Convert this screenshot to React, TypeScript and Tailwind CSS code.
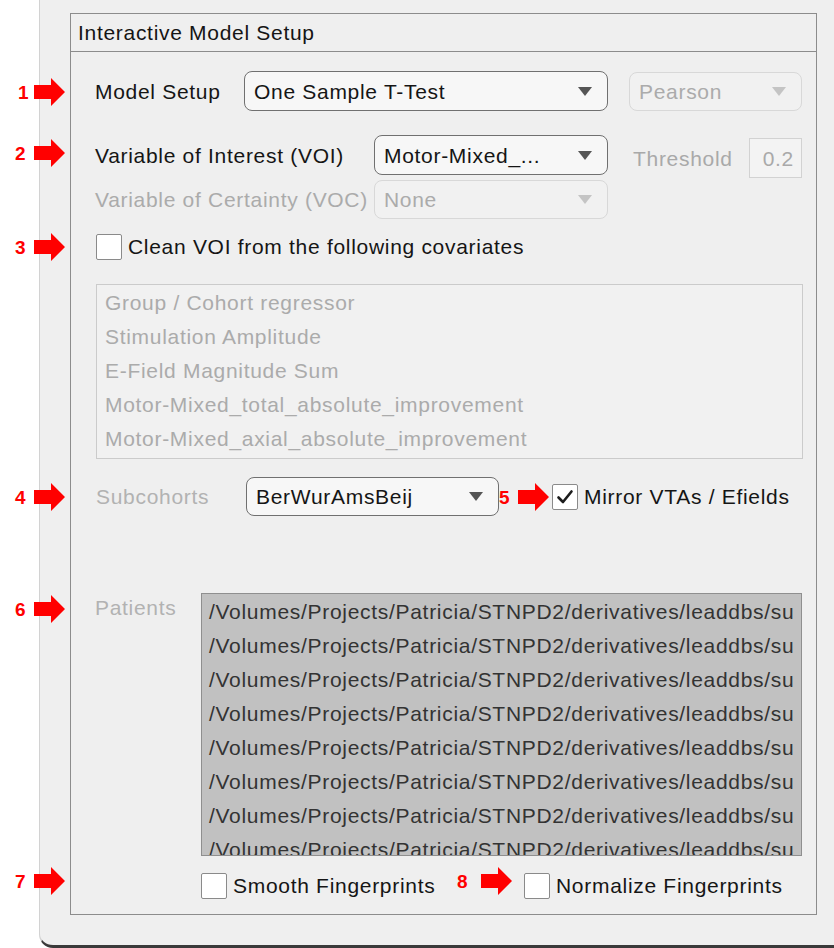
import React from "react";

const FONT = { fontFamily: '"Liberation Sans", Arial, sans-serif' };

function Caret({ disabled }: { disabled?: boolean }) {
  return (
    <svg width="14" height="9" viewBox="0 0 14 9" className="shrink-0">
      <polygon points="0,0 14,0 7,9" fill={disabled ? "#c4c4c4" : "#555555"} />
    </svg>
  );
}

function Dropdown({
  text,
  w,
  h,
  disabled,
}: {
  text: string;
  w: string;
  h: string;
  disabled?: boolean;
}) {
  return (
    <div
      className={`${w} ${h} shrink-0 flex items-center justify-between rounded-[8px] border pl-[9px] pr-[15px] ${
        disabled
          ? "border-[#d8d8d8] bg-[#f1f1f1] text-[#ababab]"
          : "border-[#707070] bg-[#f7f7f7] text-[#151515]"
      }`}
    >
      <span className="whitespace-nowrap leading-none">{text}</span>
      <Caret disabled={disabled} />
    </div>
  );
}

function Checkbox({ checked }: { checked?: boolean }) {
  return (
    <div className="w-[26px] h-[26px] shrink-0 border-[1.5px] border-[#8a8a8a] bg-white rounded-[2px] flex items-center justify-center">
      {checked && (
        <svg width="20" height="20" viewBox="0 0 20 20">
          <path d="M3.5 10.5 L8 15 L16.5 4.5" fill="none" stroke="#1c1c1c" strokeWidth="2.6" strokeLinecap="round" strokeLinejoin="round" />
        </svg>
      )}
    </div>
  );
}

function Marker({ n, numX, arrowX, cy }: { n: string; numX: number; arrowX: number; cy: number }) {
  return (
    <>
      <div
        className="absolute text-[19px] font-bold text-[#ff0000] leading-none"
        style={{ left: numX, top: cy - 9, fontFamily: '"Liberation Sans", Arial, sans-serif' }}
      >
        {n}
      </div>
      <svg
        className="absolute"
        width="31"
        height="28"
        viewBox="0 0 31 28"
        style={{ left: arrowX, top: cy - 14 }}
      >
        <polygon points="0,7 17,7 17,0 31,14 17,28 17,21 0,21" fill="#ff0000" />
      </svg>
    </>
  );
}

const covariates = [
  "Group / Cohort regressor",
  "Stimulation Amplitude",
  "E-Field Magnitude Sum",
  "Motor-Mixed_total_absolute_improvement",
  "Motor-Mixed_axial_absolute_improvement",
];

const patients = Array.from({ length: 8 }, () =>
  "/Volumes/Projects/Patricia/STNPD2/derivatives/leaddbs/su"
);

export default function App() {
  return (
    <div
      className="relative w-[834px] h-[948px] bg-white overflow-hidden flex text-[21px] tracking-[0.7px]"
      style={FONT}
    >
      <div className="ml-[39px] w-[795px] h-[948px] bg-[#efefef] border-l border-l-[#d2d2d2] border-b-[3px] border-b-[#3a3a3a] rounded-bl-[14px] pt-[13px]">
        <div className="ml-[30px] w-[747px] h-[902px] border border-[#8c8c8c] flex flex-col">
          <div className="h-[38px] shrink-0 border-b border-[#8c8c8c] pl-[7px] flex items-center text-[#151515] leading-none">
            Interactive Model Setup
          </div>

          <div className="pl-[24px] pr-[14px] flex flex-col">
            {/* Row 1 */}
            <div className="mt-[19px] h-[40px] flex items-center">
              <div className="w-[149px] shrink-0 text-[#151515] leading-none">Model Setup</div>
              <Dropdown text="One Sample T-Test" w="w-[364px]" h="h-[40px]" />
              <div className="ml-[21px]">
                <Dropdown text="Pearson" w="w-[173px]" h="h-[39px]" disabled />
              </div>
            </div>

            {/* Row 2 */}
            <div className="mt-[24px] flex items-start">
              <div className="w-[279px] h-[40px] shrink-0 flex items-center text-[#151515] leading-none">
                Variable of Interest (VOI)
              </div>
              <Dropdown text="Motor-Mixed_..." w="w-[234px]" h="h-[40px]" />
              <div className="mt-[3px] ml-[25px] h-[40px] flex items-center">
                <span className="text-[#a9a9a9] leading-none w-[116px]">Threshold</span>
                <div className="w-[53px] h-[40px] border border-[#d2d2d2] bg-[#f3f3f3] flex items-center justify-end pr-[7px] text-[#a9a9a9] leading-none">
                  0.2
                </div>
              </div>
            </div>

            {/* Row 3 */}
            <div className="mt-[2px] h-[39px] flex items-center">
              <div className="w-[279px] shrink-0 text-[#ababab] leading-none">Variable of Certainty (VOC)</div>
              <Dropdown text="None" w="w-[234px]" h="h-[39px]" disabled />
            </div>

            {/* Checkbox row */}
            <div className="mt-[15px] h-[25px] flex items-center ml-[1px]">
              <Checkbox />
              <span className="ml-[6px] text-[#151515] leading-none">Clean VOI from the following covariates</span>
            </div>

            {/* Covariates list */}
            <div className="mt-[25px] ml-[1px] w-[707px] h-[175px] border border-[#cbcbcb] bg-[#f1f1f1] pl-[8px] overflow-hidden">
              {covariates.map((c) => (
                <div key={c} className="h-[34px] flex items-center text-[#ababab] leading-none whitespace-nowrap">
                  {c}
                </div>
              ))}
            </div>

            {/* Subcohorts row */}
            <div className="mt-[18px] h-[39px] flex items-center">
              <div className="w-[151px] shrink-0 pl-[1px] text-[#b2b2b2] leading-none">Subcohorts</div>
              <Dropdown text="BerWurAmsBeij" w="w-[253px]" h="h-[39px]" />
              <div className="ml-[53px]">
                <Checkbox checked />
              </div>
              <span className="ml-[6px] text-[#151515] leading-none">Mirror VTAs / Efields</span>
            </div>

            {/* Patients row */}
            <div className="mt-[77px] flex items-start">
              <div className="w-[106px] shrink-0 h-[28px] flex items-center text-[#b2b2b2] leading-none">Patients</div>
              <div className="w-[601px] h-[263px] border border-[#8f8f8f] bg-[#c1c1c1] overflow-hidden pl-[7px]">
                {patients.map((p, i) => (
                  <div key={i} className="h-[34px] flex items-center text-[#333333] leading-none whitespace-nowrap">
                    {p}
                  </div>
                ))}
              </div>
            </div>

            {/* Bottom checkboxes */}
            <div className="mt-[17px] h-[25px] flex items-center ml-[106px]">
              <div className="w-[323px] shrink-0 flex items-center">
                <Checkbox />
                <span className="ml-[6px] text-[#151515] leading-none">Smooth Fingerprints</span>
              </div>
              <Checkbox />
              <span className="ml-[6px] text-[#151515] leading-none">Normalize Fingerprints</span>
            </div>
          </div>
        </div>
      </div>

      <Marker n="1" numX={18} arrowX={34} cy={92} />
      <Marker n="2" numX={15} arrowX={34} cy={153} />
      <Marker n="3" numX={15} arrowX={34} cy={247} />
      <Marker n="4" numX={15} arrowX={34} cy={497} />
      <Marker n="5" numX={499} arrowX={518} cy={497} />
      <Marker n="6" numX={15} arrowX={34} cy={609} />
      <Marker n="7" numX={15} arrowX={34} cy={881} />
      <Marker n="8" numX={457} arrowX={481} cy={881} />
    </div>
  );
}
